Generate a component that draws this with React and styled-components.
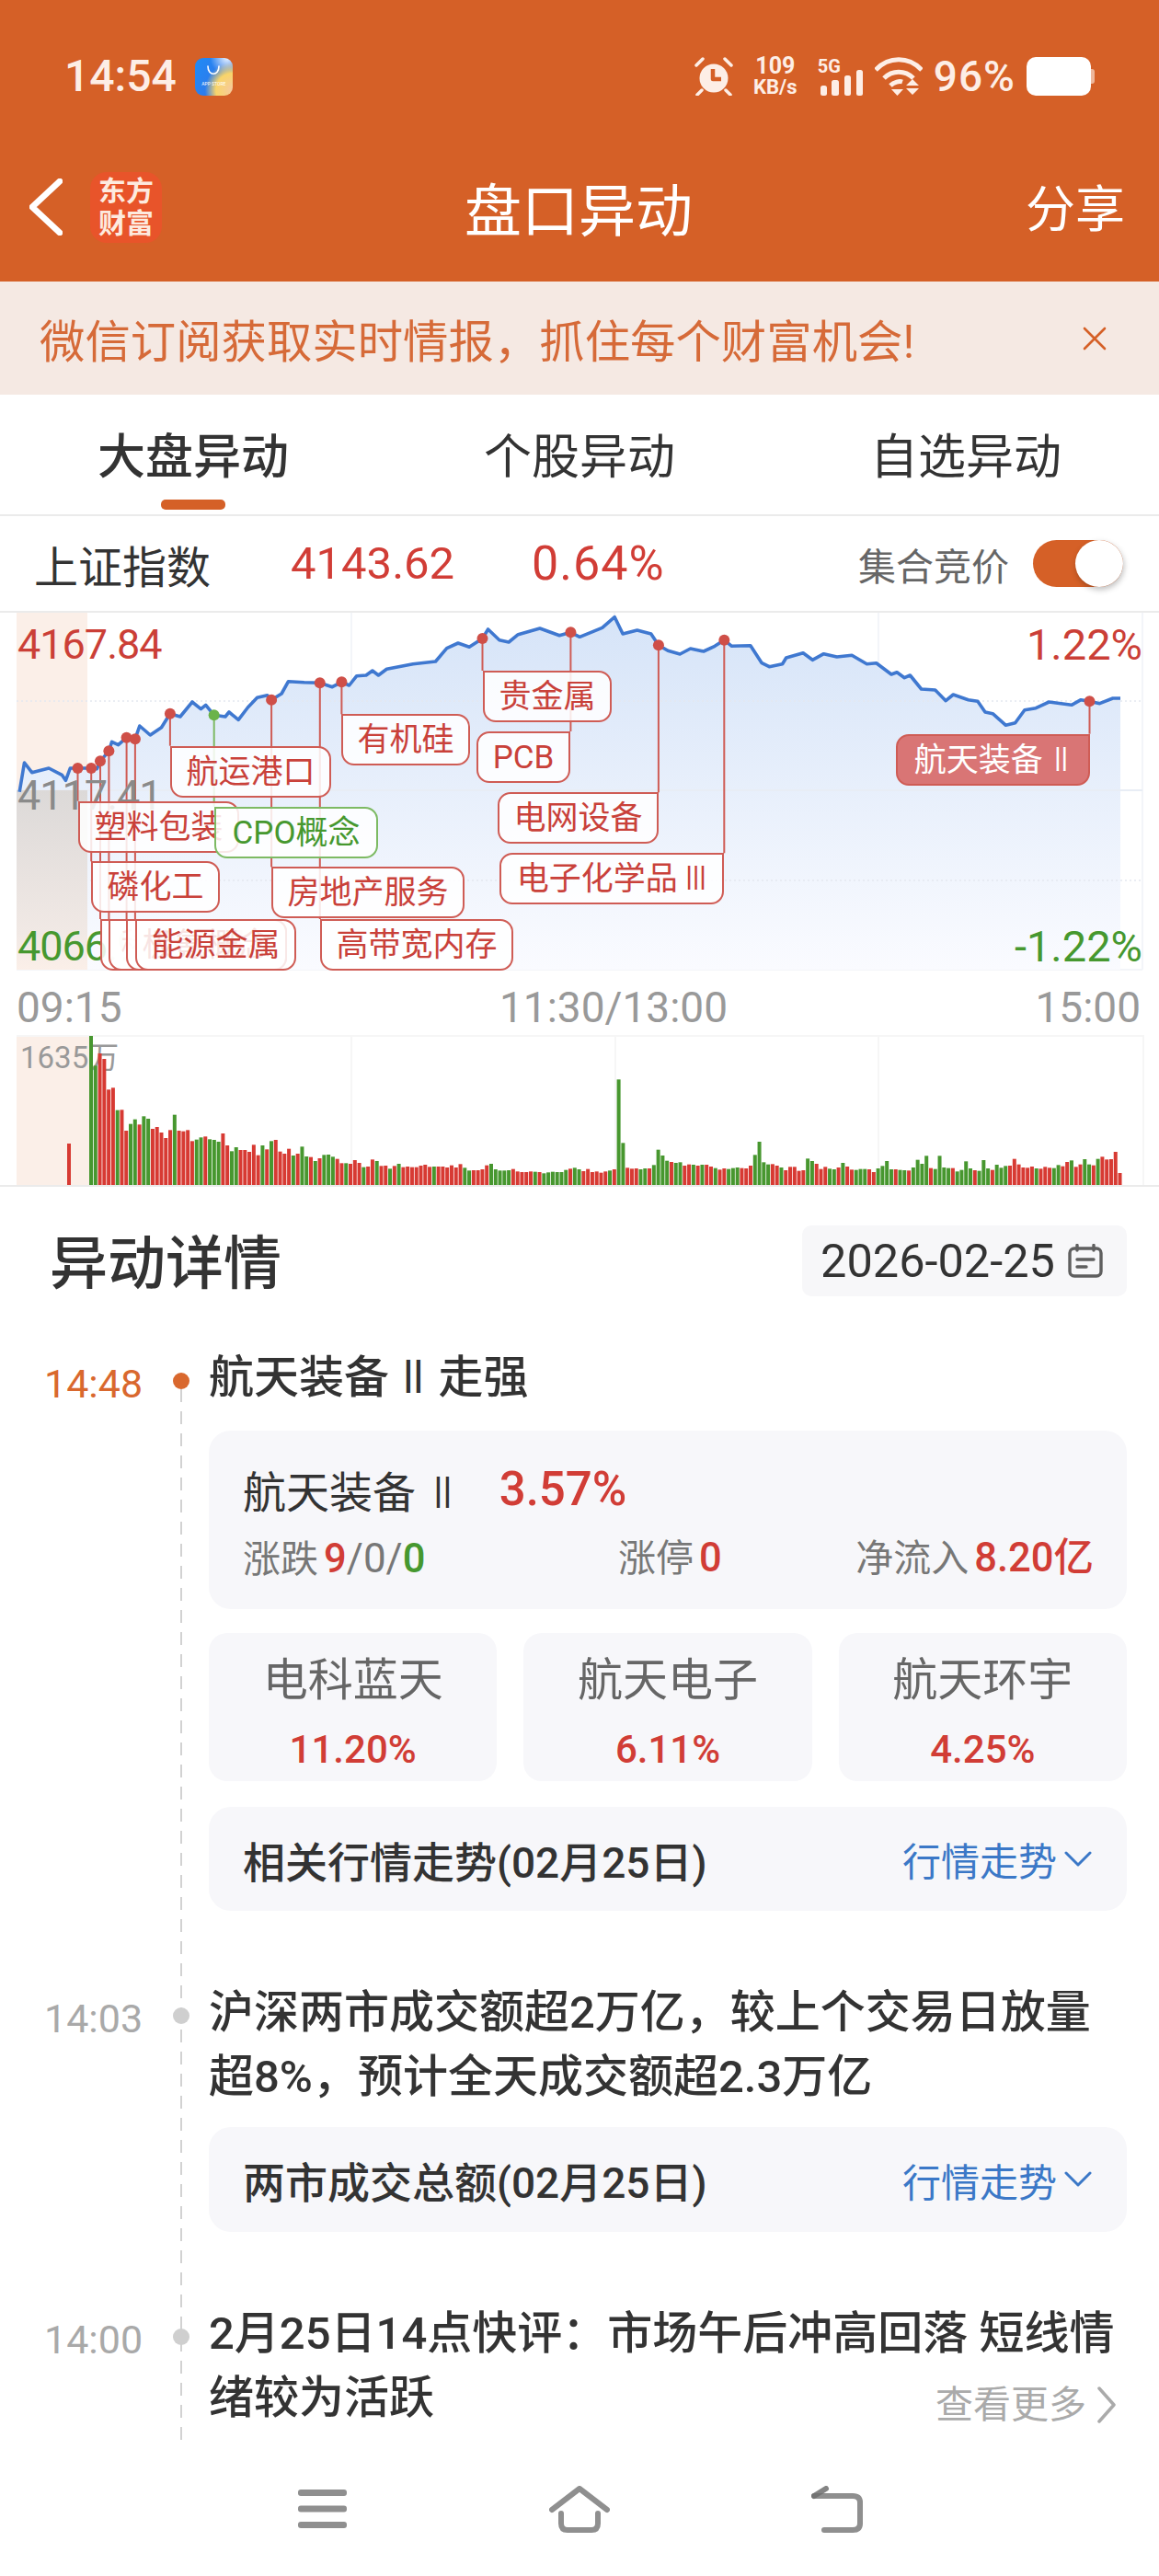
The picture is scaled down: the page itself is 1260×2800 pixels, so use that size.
import React from 'react';
import styled, { createGlobalStyle } from 'styled-components';

const FONT = `Roboto, "Noto Sans CJK SC", "Noto Sans", sans-serif`;
const ORANGE = '#d56027';
const RED = '#d13d36';
const GREEN = '#46982f';

const Global = createGlobalStyle`
  html, body { margin: 0; padding: 0; background: #fff; }
  * { box-sizing: border-box; }
  body { font-family: ${FONT}; color: #333; }
`;

const Page = styled.div`
  width: 1260px; height: 2800px; display: flex; flex-direction: column; overflow: hidden; background: #fff;
`;
const Header = styled.header`
  height: 306px; background: ${ORANGE}; display: flex; flex-direction: column; flex: none;
`;
const StatusBar = styled.div`
  height: 166px; padding: 62px 74px 0 70px; display: flex; justify-content: space-between; align-items: flex-start;
  color: #fdeee6;
`;
const StatusLeft = styled.div`display: flex; align-items: center; gap: 20px; height: 42px;`;
const Clock = styled.span`font-size: 48px; font-weight: 500; line-height: 44px;`;
const AppIcon = styled.div`
  width: 41px; height: 41px; border-radius: 9px; display: flex; flex-direction: column; align-items: center;
  background: radial-gradient(circle at 100% 85%, #f6c9a0 0%, #f8d56a 34%, transparent 56%), radial-gradient(circle at 85% 0%, #e8f2ff 0%, transparent 34%), linear-gradient(120deg, #1f8bf5, #3a6fe6);
`;
const AppIconText = styled.span`font-size: 5px; line-height: 6px; color: #fff; white-space: nowrap;`;
const StatusRight = styled.div`display: flex; align-items: flex-start; height: 42px;`;
const NetSpeed = styled.div`
  width: 50px; margin-left: 21px; display: flex; flex-direction: column; align-items: center; font-weight: 700;
`;
const NetValue = styled.span`font-size: 25px; line-height: 20px;`;
const NetUnit = styled.span`font-size: 22px; line-height: 22px; margin-top: 2px;`;
const Signal = styled.div`position: relative; width: 49px; height: 42px; margin-left: 21px;`;
const SignalTag = styled.span`
  position: absolute; left: 0; top: 1px; font-size: 20px; line-height: 18px; font-weight: 700;
`;
const Wifi = styled.svg`margin-left: 13px;`;
const Percent = styled.span`font-size: 46px; line-height: 42px; font-weight: 500; margin-left: 12px; letter-spacing: 1px;`;
const Battery = styled.div`
  width: 70px; height: 42px; border-radius: 10px; background: #fff; margin-left: 12px; position: relative;
  &::after { content: ''; position: absolute; left: 70px; top: 13px; width: 4px; height: 16px; border-radius: 0 3px 3px 0; background: #eeb79b; }
`;
const TitleRow = styled.div`
  height: 140px; padding: 0 37px 14px 32px; display: grid; grid-template-columns: 1fr auto 1fr; align-items: center; color: #fff;
`;
const TitleLeft = styled.div`display: flex; align-items: center; gap: 30px; margin-top: -8px;`;
const Logo = styled.div`
  width: 78px; height: 77px; border-radius: 18px; background: #e8542a; color: #fdeadf; display: flex; align-items: center;
  justify-content: center; text-align: center; font-size: 30px; line-height: 35px; font-weight: 700;
`;
const Title = styled.h1`margin: 4px 0 0 3px; font-size: 62px; line-height: 70px; font-weight: 400;`;
const Share = styled.span`font-size: 54px; line-height: 70px; justify-self: end;`;

const Banner = styled.div`
  height: 123px; flex: none; background: #f5e9e3; color: #d66a38; font-size: 49.4px; display: flex; align-items: center;
  justify-content: space-between; padding: 0 57px 0 43px; white-space: nowrap;
`;
const Tabs = styled.nav`
  height: 132px; flex: none; border-bottom: 2px solid #ebebeb; display: grid; grid-template-columns: 420px 420px 420px;
`;
const Tab = styled.div`
  position: relative; display: flex; justify-content: center; padding-top: 34px;
  font-size: 52px; line-height: 70px; font-weight: ${p => (p.$active ? 500 : 400)}; color: #333;
`;
const TabMark = styled.i`
  position: absolute; left: 175px; bottom: 5px; width: 70px; height: 11px; border-radius: 5px; background: ${ORANGE};
`;
const IndexRow = styled.div`
  height: 105px; flex: none; border-bottom: 2px solid #ebebeb; display: flex; align-items: center; padding: 0 39px 0 37px;
`;
const IndexName = styled.span`font-size: 48px; color: #333; width: 279px;`;
const IndexValue = styled.span`font-size: 49px; color: ${RED}; width: 262px;`;
const IndexPct = styled.span`font-size: 52px; letter-spacing: 1px; color: ${RED}; flex: 1;`;
const AuctionText = styled.span`font-size: 41px; color: #666; margin-right: 26px;`;
const Switch = styled.div`
  width: 98px; height: 51px; border-radius: 26px; background: ${ORANGE}; position: relative;
  &::after { content: ''; position: absolute; right: 0; top: 0; width: 52px; height: 51px; border-radius: 50%; background: #fff;
    box-shadow: 1px 3px 6px rgba(0,0,0,.25); }
`;

const ChartCanvas = styled.div`position: relative; height: 389px; flex: none; width: 1260px;`;
const ChartSvg = styled.svg`position: absolute; left: 0; top: 0;`;
const AxisText = styled.span`
  position: absolute; font-size: ${p => p.$size}px; letter-spacing: ${p => p.$track || 0}px; line-height: 60px;
  color: ${p => p.$color}; white-space: nowrap;
`;
const Tag = styled.div`
  position: absolute; height: 56px; border: 2px solid ${p => (p.$kind === 'green' ? '#7dba63' : '#cf5c55')};
  border-radius: 14px; border-top-left-radius: ${p => (p.$anchor === 'left' ? 0 : 14)}px;
  border-top-right-radius: ${p => (p.$anchor === 'right' ? 0 : 14)}px;
  background: ${p => (p.$kind === 'active' ? '#d97575' : 'rgba(255,255,255,.86)')};
  color: ${p => (p.$kind === 'green' ? GREEN : p.$kind === 'active' ? '#fff' : '#c9413a')};
  font-size: 35px; line-height: 53px; text-align: center; white-space: nowrap;
`;
const Roman = styled.span`
  display: inline-block; transform: scaleX(.72); margin: 0 ${p => p.$pull ?? -6}px;
`;
const Axis = styled.div`
  height: 70px; flex: none; padding: 10px 20px 0 18px; display: flex; justify-content: space-between; align-items: center;
  font-size: 46px; color: #999;
`;
const AxisMiddle = styled.span`margin-left: 76px;`;
const VolumeBox = styled.div`position: relative; height: 165px; flex: none; border-bottom: 2px solid #ebebeb;`;
const VolumeLabel = styled.span`position: absolute; left: 22px; top: 4px; font-size: 33px; line-height: 42px; color: #999;`;
const VolumeSvg = styled.svg`position: absolute; left: 0; top: 0;`;

const DetailHead = styled.div`
  height: 173px; flex: none; padding: 42px 35px 0 54px; display: flex; justify-content: space-between; align-items: flex-start;
`;
const DetailTitle = styled.h2`margin: 0; font-size: 63px; line-height: 83px; font-weight: 500; color: #333;`;
const DateBox = styled.div`
  width: 353px; height: 77px; border-radius: 10px; background: #f7f7f9; display: flex; align-items: center; padding-left: 20px;
  gap: 14px; font-size: 50.5px; color: #333;
`;
const Timeline = styled.div`
  position: relative; flex: 1; min-height: 0; padding-right: 35px;
  &::before { content: ''; position: absolute; left: 196px; top: 47px; bottom: 24px; width: 2px;
    background: repeating-linear-gradient(to bottom, #d2d2d2 0 14px, transparent 14px 24px); }
`;
const Item = styled.section`
  display: grid; grid-template-columns: 227px 1fr; margin-bottom: ${p => p.$gap}px; position: relative;
`;
const TimeCol = styled.div`
  display: flex; align-items: center; height: 70px; padding: 12px 0 0 48px; gap: 33px; position: relative; z-index: 1;
`;
const TimeText = styled.span`
  width: 107px; font-size: 43px; color: ${p => (p.$current ? '#d9682e' : '#a9a9a9')};
`;
const Dot = styled.i`
  width: 18px; height: 18px; border-radius: 50%; margin-top: -6px;
  background: ${p => (p.$current ? '#d9682e' : '#cfcfcf')};
`;
const Body = styled.div`min-width: 0;`;
const Heading = styled.div`font-size: 49px; line-height: 70px; font-weight: 500; color: #333;`;
const Card = styled.div`background: #f7f7fa; border-radius: 24px;`;
const SummaryCard = styled(Card)`
  height: 194px; margin-top: 22px; padding: 28px 36px 0 37px; display: flex; flex-direction: column;
`;
const SummaryTop = styled.div`display: flex; align-items: center; height: 70px; gap: 44px;`;
const SummaryName = styled.span`font-size: 47px; color: #333;`;
const SummaryPct = styled.span`font-size: 51px; color: ${RED}; font-weight: 500;`;
const SummaryStats = styled.div`display: grid; grid-template-columns: 408px auto 1fr; margin-top: 16px;`;
const Stat = styled.span`font-size: 41px; line-height: 50px; color: #777; &:last-child { justify-self: end; }`;
const Num = styled.b`font-weight: 500; font-size: 43.5px; color: ${p => p.$c || RED}; margin-left: ${p => p.$m ?? 6}px;`;
const Slash = styled.span`font-size: 44px;`;
const Stocks = styled.div`display: grid; grid-template-columns: repeat(3, 1fr); gap: 29px; margin-top: 26px;`;
const StockCard = styled(Card)`
  height: 161px; display: flex; flex-direction: column; align-items: center; padding-top: 22px; border-radius: 20px;
`;
const StockName = styled.span`font-size: 49px; line-height: 60px; color: #666;`;
const StockPct = styled.span`font-size: 42px; line-height: 50px; margin-top: 20px; color: ${RED}; font-weight: 500;`;
const LinkCard = styled(Card)`
  height: ${p => p.$h}px; margin-top: ${p => p.$top}px; display: flex; align-items: center; justify-content: space-between;
  padding: 0 38px 0 37px;
`;
const LinkTitle = styled.span`font-size: 46px; font-weight: 500; color: #333;`;
const LinkAction = styled.span`display: flex; align-items: center; gap: 8px; font-size: 42px; color: #3b78c7;`;
const More = styled.span`
  position: absolute; right: 11px; bottom: 0; display: flex; align-items: center; gap: 11px; font-size: 41px; line-height: 56px; color: #aaa;
`;
const BottomNav = styled.nav`
  height: 120px; flex: none; position: relative; background: #fff; display: flex; align-items: flex-start; padding-top: 22px;
`;
const NavSlot = styled.div`
  position: relative; margin-left: ${p => p.$left}px; padding-top: ${p => p.$top}px; line-height: 0;
`;

const Z = (x, y) => [x / 2.45, 560 + y / 3 - 667];
const Z3 = (x, y) => [620 + x / 2.45, 560 + y / 3 - 667];

const lineA = [[52,905],[65,810],[85,842],[130,828],[165,850],[175,868],[187,828],[207,828],[243,828],[258,830],[267,805],[290,772],[298,742],[315,752],[337,728],[360,733],[372,690],[400,720],[430,695],[453,650],[480,660],[512,612],[535,635],[548,622],[570,655],[600,660],[610,645],[635,670],[660,630],[685,598],[712,590],[723,605],[750,585],[768,545],[810,548],[852,550],[885,563],[910,547],[930,558],[950,527],[975,525],[992,510],[1008,525],[1030,505],[1100,488],[1160,480],[1190,437],[1220,420],[1250,433],[1285,405],[1300,375],[1330,410],[1355,417],[1380,392],[1438,372],[1490,395],[1520,385]].map(p => Z(...p));
const lineB = [[25,400],[85,370],[118,335],[140,390],[178,378],[215,390],[235,427],[260,445],[292,456],[320,438],[355,447],[385,430],[410,410],[430,430],[480,428],[510,485],[530,497],[565,488],[575,468],[620,452],[645,475],[675,455],[710,465],[750,460],[790,488],[815,485],[855,522],[870,515],[890,533],[905,525],[935,570],[972,573],[1000,608],[1020,588],[1060,605],[1085,610],[1105,645],[1125,650],[1160,688],[1185,680],[1210,638],[1240,632],[1275,612],[1335,622],[1360,605],[1383,610],[1410,617],[1445,600],[1465,600]].map(p => Z3(...p));
const line = [...lineA, ...lineB];
const linePts = line.map(p => p.map(v => v.toFixed(1)).join(',')).join(' ');
const areaPts = `${line[0][0].toFixed(1)},388 ${linePts} ${line[line.length - 1][0].toFixed(1)},388`;

const markers = [
  { d: Z(207, 828), to: 935 },
  { d: Z(243, 828), to: 1132 },
  { d: Z(267, 805), to: 1320 },
  { d: Z(290, 772), to: 1320 },
  { d: Z(337, 728), to: 1320 },
  { d: Z(360, 733), to: 1320 },
  { d: Z(453, 650), to: 755 },
  { d: Z(570, 655), to: 953, green: true },
  { d: Z(723, 605), to: 1150 },
  { d: Z(852, 550), to: 1320 },
  { d: Z(910, 547), to: 652 },
  { d: Z(1285, 405), to: 510 },
  { d: Z(1520, 385), to: 708 },
  { d: Z3(235, 427), to: 907 },
  { d: Z3(410, 410), to: 1105 },
  { d: Z3(1383, 610), to: 716 },
];

const tag = (text, x1, x2, zy, anchor = 'left', kind = 'red') => ({ text, left: x1, width: x2 - x1, top: zy / 3 + 560 - 667, anchor, kind });
const tags = [
  tag('塑料包装', 85, 260, 935),
  tag('磷化工', 99, 239, 1132),
  tag('稀土永磁', 109, 294, 1320),
  tag('小金属', 118, 312, 1320),
  tag('极氪概念', 137, 312, 1320),
  tag('能源金属', 147, 322, 1320),
  tag('航运港口', 185, 360, 755),
  tag('房地产服务', 295, 505, 1150),
  tag('CPO概念', 233, 411, 953, 'left', 'green'),
  tag('高带宽内存', 348, 558, 1320),
  tag('有机硅', 371, 511, 652),
  tag('贵金属', 525, 665, 510),
  tag('PCB', 518, 620, 708, 'right'),
  tag('电网设备', 541, 716, 907, 'right'),
  tag('电子化学品 Ⅲ', 543, 787, 1105, 'right'),
  tag('航天装备 Ⅱ', 974, 1185, 716, 'right', 'active'),
];

const volA = [-3,-100,60,78,178,172,-245,244,312,-290,-275,292,-265,-273,306,300,318,336,310,-260,312,314,310,346,-341,-334,331,-340,-342,-348,321,360,-379,-366,375,375,381,358,392,-360,373,-346,342,380,387,371,-393,387,-364,-396,398,-411,402,-391,-390,-397,404,418,-418,420,408,417,-431,429,406,-411,427,426,-436,427,-420,431,429,431,431,426];
const volB = [423,430,-429,429,429,432,425,432,421,-433,-442,441,441,438,425,-420,-438,-442,-442,-441,437,445,447,447,445,-446,447,-451,-448,-446,-447,-447,-440,436,-433,-438,444,437,447,445,449,445,-442,438,-145,-352,433,436,435,-438,-435,435,-424,-374,-393,-410,414,-417,-415,426,422,-423,426,-423,423,429,-434,439,435,-437,-434,-432,434,435,426,-391,-348,-415,-422];
const volC = [421,426,-432,441,430,430,443,441,-403,-411,420,437,430,-436,-438,432,-417,429,439,-440,-437,-437,438,447,-435,-427,-411,-438,438,-440,-441,442,-432,-407,-420,-394,434,-437,-394,-432,-434,434,-445,-440,-412,-435,441,-443,-408,-435,440,-423,-433,-427,426,404,422,432,433,429,-435,436,430,433,-434,-424,428,414,-409,430,422,-405,-422,425,-404,397,406,405,381,450];
const volume = [...volA, ...volB, ...volC];

const withRoman = text => text.split(/([ⅡⅢ])/).map((part, i) => (/[ⅡⅢ]/.test(part) ? <Roman key={i}>{part}</Roman> : part));

const Chevron = () => (
  <svg width="30" height="18" viewBox="0 0 30 18" fill="none" stroke="#3b78c7" strokeWidth="3" strokeLinecap="round" strokeLinejoin="round">
    <path d="M2 2 L15 15 L28 2" />
  </svg>
);

const StatusIcons = () => (
  <StatusRight>
    <svg width="42" height="42" viewBox="0 0 42 42" fill="none">
      <circle cx="21" cy="23" r="15.5" fill="#fdeee6" />
      <path d="M20 13 V24 H29" stroke={ORANGE} strokeWidth="4.5" strokeLinejoin="round" />
      <path d="M2 9 L9 2 M33 2 L40 9 M8 36 L3 41 M34 36 L39 41" stroke="#fdeee6" strokeWidth="3.5" strokeLinecap="round" />
    </svg>
    <NetSpeed>
      <NetValue>109</NetValue>
      <NetUnit>KB/s</NetUnit>
    </NetSpeed>
    <Signal>
      <SignalTag>5G</SignalTag>
      <svg width="49" height="42" viewBox="0 0 49 42" fill="#fdeee6">
        <rect x="3" y="31" width="7" height="11" rx="2.5" />
        <rect x="15" y="25" width="8" height="17" rx="2.5" />
        <rect x="29" y="20" width="7" height="22" rx="2.5" />
        <rect x="42" y="14" width="7" height="28" rx="2.5" />
      </svg>
    </Signal>
    <Wifi width="52" height="42" viewBox="0 0 52 42" fill="none" stroke="#fdeee6" strokeWidth="5" strokeLinecap="butt">
      <path d="M1 14 C15 -1 37 -1 51 14" />
      <path d="M10 23 C19 14 33 14 42 23" />
      <path d="M17 31 C21 27 27 26 30 27" />
      <path d="M18 35 H31 L24.5 42 Z" fill="#fdeee6" stroke="none" />
      <path d="M34 31 H48 L41 24 Z M34 34 H48 L41 41 Z" fill="#fdeee6" stroke="none" />
    </Wifi>
    <Percent>96%</Percent>
    <Battery />
  </StatusRight>
);

const PriceChart = () => (
  <ChartCanvas>
    <ChartSvg width="1260" height="389" viewBox="0 0 1260 389">
      <defs>
        <linearGradient id="area" x1="0" y1="0" x2="0" y2="1">
          <stop offset="0" stopColor="#d6e4f8" />
          <stop offset="1" stopColor="#fafbff" />
        </linearGradient>
        <linearGradient id="shade" x1="0" y1="0" x2="0" y2="1">
          <stop offset="0" stopColor="#dcd9d8" />
          <stop offset="0.8" stopColor="#f1e9e5" />
          <stop offset="1" stopColor="#fbefe8" />
        </linearGradient>
      </defs>
      <rect x="18" y="0" width="77" height="388" fill="#fbefe8" />
      <path d="M382 0 V388 M668 0 V388 M955 0 V388 M1242 0 V388 M18 388 H1242" stroke="#f3f5f9" strokeWidth="2" />
      <polygon points={areaPts} fill="url(#area)" />
      <path d="M18 193 H1242" stroke="#e8edf5" strokeWidth="2" />
      <path d="M18 96 H1242 M18 291 H1242" stroke="#e4e8ef" strokeWidth="1.5" strokeDasharray="2 3" />
      <rect x="18" y="193" width="77" height="195" fill="url(#shade)" />
      <polyline points={linePts} fill="none" stroke="#3f78d0" strokeWidth="3.6" strokeLinejoin="round" />
      {markers.map((m, i) => (
        <path key={i} d={`M${m.d[0].toFixed(1)} ${m.d[1].toFixed(1)} V${(m.to / 3 + 560 - 667).toFixed(1)}`} stroke={m.green ? '#7dba63' : '#cf5c55'} strokeWidth="2" />
      ))}
      {markers.map((m, i) => (
        <circle key={i} cx={m.d[0]} cy={m.d[1]} r="6" fill={m.green ? '#6bb34a' : '#cf4f48'} />
      ))}
    </ChartSvg>
    <AxisText $size={45} $track={-1} $color="#cb3f37" style={{ left: 19, top: 5 }}>4167.84</AxisText>
    <AxisText $size={45} $track={-1} $color="#8a8a8a" style={{ left: 19, top: 169 }}>4117.41</AxisText>
    <AxisText $size={45} $track={-1} $color={GREEN} style={{ left: 19, top: 333 }}>4066.98</AxisText>
    <AxisText $size={47} $color="#cb3f37" style={{ right: 18, top: 5 }}>1.22%</AxisText>
    <AxisText $size={47} $color={GREEN} style={{ right: 18, top: 333 }}>-1.22%</AxisText>
    {tags.map(t => (
      <Tag key={t.text} $anchor={t.anchor} $kind={t.kind} style={{ left: t.left, top: t.top, width: t.width }}>{withRoman(t.text)}</Tag>
    ))}
  </ChartCanvas>
);

const VolumeChart = () => (
  <VolumeBox>
    <VolumeSvg width="1260" height="163" viewBox="0 0 1260 163">
      <rect x="18" y="0" width="79" height="163" fill="#fbefe8" />
      <path d="M18 1 H1243 M1243 0 V163 M382 0 V163 M669 0 V163 M955 0 V163" stroke="#f6f6f6" strokeWidth="2" />
    </VolumeSvg>
    <VolumeLabel>1635万</VolumeLabel>
    <VolumeSvg width="1260" height="163" viewBox="0 0 1260 163">
      <rect x="73" y="118" width="4" height="45" fill="#d73a33" />
      {volume.map((v, i) => {
        const top = Math.abs(v) / 3;
        return <rect key={i} x={97 + i * 4.78} y={top} width="4" height={163 - top} fill={v < 0 ? '#47972f' : '#d73a33'} />;
      })}
    </VolumeSvg>
  </VolumeBox>
);

export default function App() {
  return (
    <Page>
      <Global />
      <Header>
        <StatusBar>
          <StatusLeft>
            <Clock>14:54</Clock>
            <AppIcon>
              <svg width="20" height="25" viewBox="0 0 20 25" fill="none" stroke="#fff" strokeWidth="1.6" strokeLinecap="round">
                <path d="M4 9 C4 20 16 20 16 9" />
              </svg>
              <AppIconText>APP STORE</AppIconText>
            </AppIcon>
          </StatusLeft>
          <StatusIcons />
        </StatusBar>
        <TitleRow>
          <TitleLeft>
            <svg width="36" height="62" viewBox="0 0 36 62" fill="none" stroke="#fff" strokeWidth="6.5" strokeLinecap="round" strokeLinejoin="round">
              <path d="M33 3 L3 31 L33 59" />
            </svg>
            <Logo>东方<br />财富</Logo>
          </TitleLeft>
          <Title>盘口异动</Title>
          <Share>分享</Share>
        </TitleRow>
      </Header>
      <Banner>
        <span>微信订阅获取实时情报，抓住每个财富机会!</span>
        <svg width="26" height="26" viewBox="0 0 26 26" stroke={ORANGE} strokeWidth="2.6" strokeLinecap="round">
          <path d="M2 2 L24 24 M24 2 L2 24" />
        </svg>
      </Banner>
      <Tabs>
        <Tab $active>大盘异动<TabMark /></Tab>
        <Tab>个股异动</Tab>
        <Tab>自选异动</Tab>
      </Tabs>
      <IndexRow>
        <IndexName>上证指数</IndexName>
        <IndexValue>4143.62</IndexValue>
        <IndexPct>0.64%</IndexPct>
        <AuctionText>集合竞价</AuctionText>
        <Switch />
      </IndexRow>
      <PriceChart />
      <Axis>
        <span>09:15</span>
        <AxisMiddle>11:30/13:00</AxisMiddle>
        <span>15:00</span>
      </Axis>
      <VolumeChart />
      <DetailHead>
        <DetailTitle>异动详情</DetailTitle>
        <DateBox>
          2026-02-25
          <svg width="38" height="37" viewBox="0 0 38 37" fill="none" stroke="#5f5f5f" strokeWidth="3.4" strokeLinecap="round">
            <rect x="2" y="5" width="34" height="30" rx="5" />
            <path d="M10 1.5 V7 M28 1.5 V7 M10 17 H28 M10 25 H20" />
          </svg>
        </DateBox>
      </DetailHead>
      <Timeline>
        <Item $gap={76}>
          <TimeCol><TimeText $current>14:48</TimeText><Dot $current /></TimeCol>
          <Body>
            <Heading>航天装备 <Roman $pull={-10}>Ⅱ</Roman> 走强</Heading>
            <SummaryCard>
              <SummaryTop>
                <SummaryName>航天装备 <Roman>Ⅱ</Roman></SummaryName>
                <SummaryPct>3.57%</SummaryPct>
              </SummaryTop>
              <SummaryStats>
                <Stat>涨跌<Num>9</Num><Slash>/0/</Slash><Num $c={GREEN} $m={0}>0</Num></Stat>
                <Stat>涨停<Num>0</Num></Stat>
                <Stat>净流入<Num>8.20亿</Num></Stat>
              </SummaryStats>
            </SummaryCard>
            <Stocks>
              <StockCard><StockName>电科蓝天</StockName><StockPct>11.20%</StockPct></StockCard>
              <StockCard><StockName>航天电子</StockName><StockPct>6.11%</StockPct></StockCard>
              <StockCard><StockName>航天环宇</StockName><StockPct>4.25%</StockPct></StockCard>
            </Stocks>
            <LinkCard $h={113} $top={28}>
              <LinkTitle>相关行情走势(02月25日)</LinkTitle>
              <LinkAction>行情走势<Chevron /></LinkAction>
            </LinkCard>
          </Body>
        </Item>
        <Item $gap={76}>
          <TimeCol><TimeText>14:03</TimeText><Dot /></TimeCol>
          <Body>
            <Heading>沪深两市成交额超2万亿，较上个交易日放量超8%，预计全天成交额超2.3万亿</Heading>
            <LinkCard $h={114} $top={19}>
              <LinkTitle>两市成交总额(02月25日)</LinkTitle>
              <LinkAction>行情走势<Chevron /></LinkAction>
            </LinkCard>
          </Body>
        </Item>
        <Item $gap={0}>
          <TimeCol><TimeText>14:00</TimeText><Dot /></TimeCol>
          <Body>
            <Heading>2月25日14点快评：市场午后冲高回落 短线情绪较为活跃</Heading>
          </Body>
          <More>
            查看更多
            <svg width="22" height="40" viewBox="0 0 22 40" fill="none" stroke="#aaa" strokeWidth="3.5" strokeLinecap="round" strokeLinejoin="round">
              <path d="M3 2 L19 20 L3 38" />
            </svg>
          </More>
        </Item>
      </Timeline>
      <BottomNav>
        <NavSlot $left={324} $top={4}>
          <svg width="53" height="42" viewBox="0 0 53 42" fill="#8f8f8f">
            <rect x="0" y="0" width="53" height="7" rx="3" />
            <rect x="0" y="17.5" width="53" height="7" rx="3" />
            <rect x="0" y="35" width="53" height="7" rx="3" />
          </svg>
        </NavSlot>
        <NavSlot $left={220} $top={0}>
          <svg width="66" height="52" viewBox="0 0 66 52" fill="none" stroke="#8f8f8f" strokeWidth="6" strokeLinecap="round" strokeLinejoin="round">
            <path d="M3 26 L33 3 L63 26" />
            <path d="M13 30 V41 Q13 48 20 48 H46 Q53 48 53 41 V30" />
          </svg>
        </NavSlot>
        <NavSlot $left={219} $top={0}>
          <svg width="56" height="52" viewBox="0 0 56 52" fill="none" stroke="#8f8f8f" strokeWidth="6" strokeLinecap="round" strokeLinejoin="round">
            <path d="M3 11 H45 Q53 11 53 18 V41 Q53 48 45 48 H14" />
            <path d="M3 11 L16 3" stroke="#6f6f6f" strokeOpacity="0.85" />
          </svg>
        </NavSlot>
      </BottomNav>
    </Page>
  );
}
